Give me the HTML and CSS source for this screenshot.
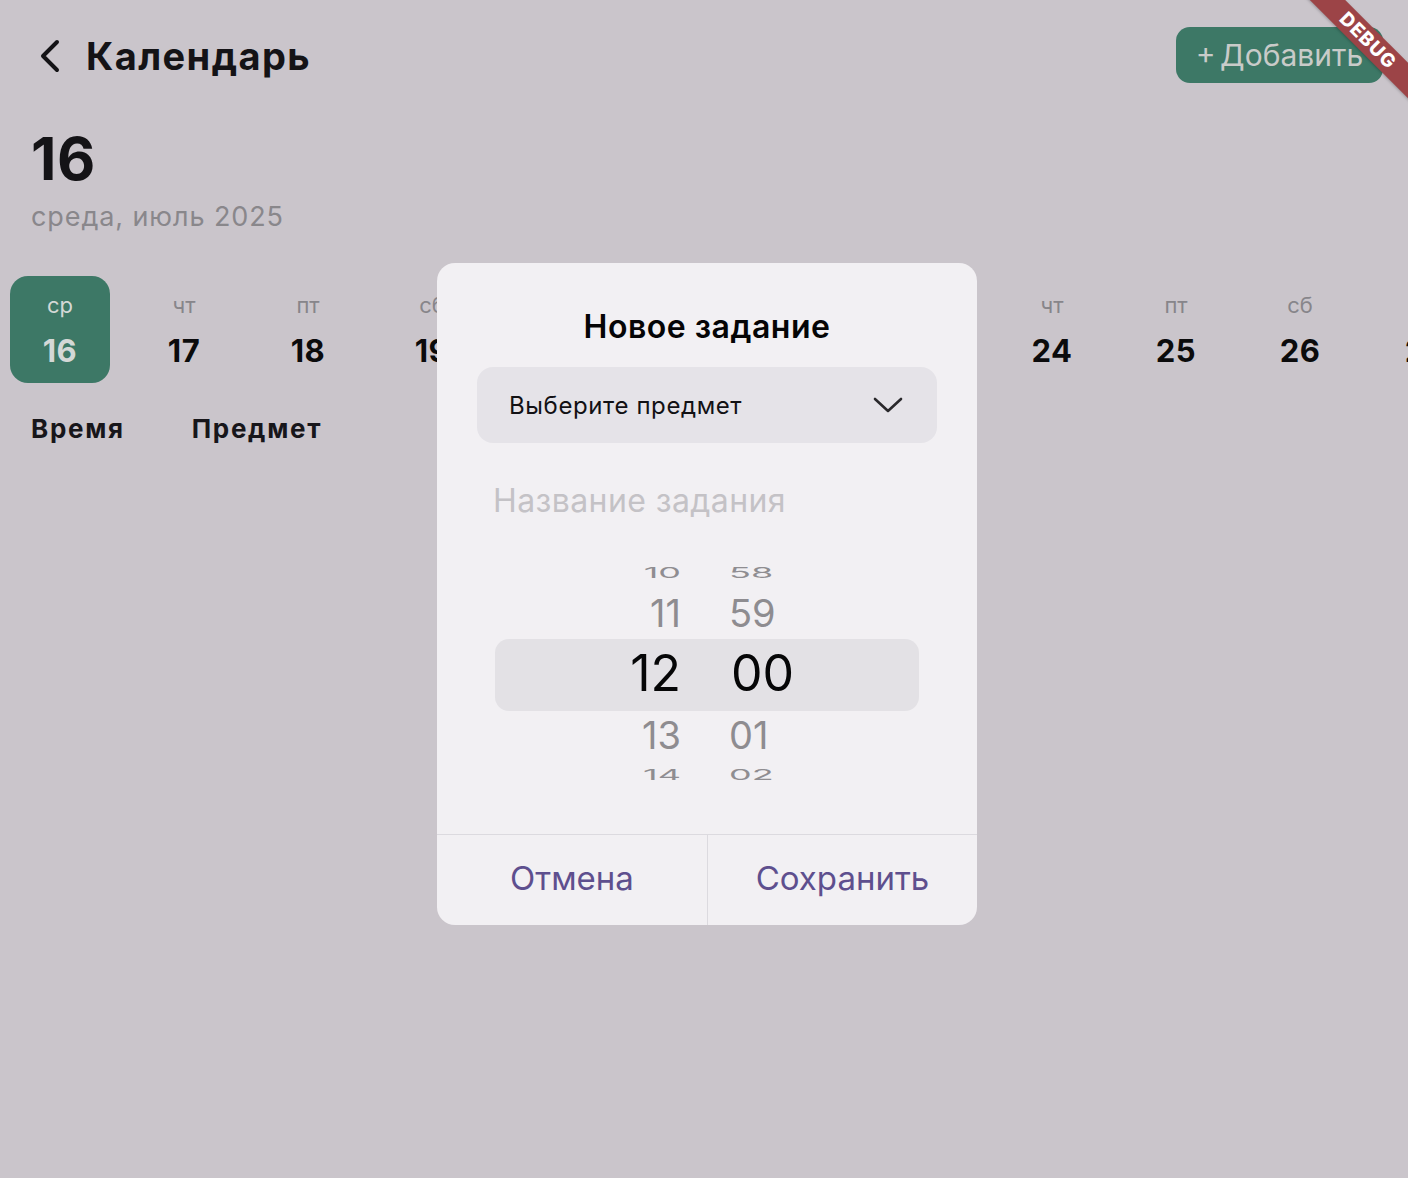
FILE: index.html
```html
<!DOCTYPE html>
<html lang="ru">
<head>
<meta charset="utf-8">
<title>Календарь</title>
<link rel="stylesheet" href="styles.css">
</head>
<body>
<div class="page">
  <header class="topbar">
    <div class="back">
      <svg class="back-icon" width="24" height="36" viewBox="0 0 24 36"><path d="M18 4 L4 18 L18 32" fill="none" stroke="#141316" stroke-width="4" stroke-linecap="round" stroke-linejoin="round"/></svg>
      <h1 class="title">Календарь</h1>
    </div>
    <button class="add-btn">+ Добавить</button>
  </header>

  <section class="date-head">
    <div class="big-day">16</div>
    <div class="sub-date">среда, июль 2025</div>
  </section>

  <div class="days">
    <div class="day selected"><span class="dow">ср</span><span class="num">16</span></div>
    <div class="day"><span class="dow">чт</span><span class="num">17</span></div>
    <div class="day"><span class="dow">пт</span><span class="num">18</span></div>
    <div class="day"><span class="dow">сб</span><span class="num">19</span></div>
    <div class="day"><span class="dow">вс</span><span class="num">20</span></div>
    <div class="day"><span class="dow">пн</span><span class="num">21</span></div>
    <div class="day"><span class="dow">вт</span><span class="num">22</span></div>
    <div class="day"><span class="dow">ср</span><span class="num">23</span></div>
    <div class="day"><span class="dow">чт</span><span class="num">24</span></div>
    <div class="day"><span class="dow">пт</span><span class="num">25</span></div>
    <div class="day"><span class="dow">сб</span><span class="num">26</span></div>
    <div class="day"><span class="dow">вс</span><span class="num">27</span></div>
  </div>

  <div class="cols">
    <span class="col-time">Время</span>
    <span class="col-subj">Предмет</span>
  </div>
</div>

<div class="dialog">
  <div class="dialog-body">
    <h2 class="dialog-title">Новое задание</h2>
    <div class="select">
      <span>Выберите предмет</span>
      <svg width="30" height="18" viewBox="0 0 30 18"><path d="M2 3 L15 15 L28 3" fill="none" stroke="#2a292c" stroke-width="2.6" stroke-linecap="round" stroke-linejoin="round"/></svg>
    </div>
    <div class="name-input">Название задания</div>
    <div class="picker">
      <div class="band"></div>
      <div class="row far"><span class="h">10</span><span class="m">58</span></div>
      <div class="row near"><span class="h">11</span><span class="m">59</span></div>
      <div class="row cur"><span class="h">12</span><span class="m">00</span></div>
      <div class="row near"><span class="h">13</span><span class="m">01</span></div>
      <div class="row far"><span class="h">14</span><span class="m">02</span></div>
    </div>
  </div>
  <div class="actions">
    <button class="act">Отмена</button>
    <button class="act">Сохранить</button>
  </div>
</div>

<div class="debug">DEBUG</div>
</body>
</html>
```

FILE: styles.css
```css
* { box-sizing: border-box; }
html, body { margin: 0; padding: 0; }
body {
  width: 1408px;
  height: 1178px;
  overflow: hidden;
  background: #cac5cb;
  font-family: Inter, "Noto Sans", "Liberation Sans", sans-serif;
  color: #141316;
  position: relative;
}
.page { width: 1408px; }
.topbar {
  display: flex;
  justify-content: space-between;
  align-items: flex-start;
  padding: 27px 25px 0 39px;
}
.back { display: flex; align-items: center; gap: 23px; padding-top: 10px; }
.back-icon { display: block; }
.title {
  margin: 0;
  font-size: 38px;
  font-weight: 700;
  letter-spacing: 1.4px;
  line-height: 38px;
}
.add-btn {
  border: none;
  background: #3d7866;
  color: #c9cbc9;
  font-family: inherit;
  font-size: 30px;
  font-weight: 400;
  height: 56px;
  width: 207px;
  border-radius: 14px;
  padding: 0;
  word-spacing: -4px;
}
.date-head { padding: 46px 0 0 31px; }
.big-day {
  font-size: 59px;
  font-weight: 700;
  line-height: 60px;
  color: #141316;
  letter-spacing: 0.5px;
}
.sub-date {
  margin-top: 12px;
  font-size: 27px;
  color: #89878b;
  letter-spacing: 0.9px;
  line-height: 32px;
}
.days {
  display: flex;
  gap: 24px;
  padding: 0 0 0 10px;
  margin-top: 43px;
  width: 1408px;
  overflow: hidden;
}
.day {
  flex: 0 0 100px;
  height: 107px;
  border-radius: 18px;
  display: flex;
  flex-direction: column;
  align-items: center;
  padding-top: 15px;
}
.day .dow { font-size: 22px; color: #87858a; line-height: 28px; }
.day .num { font-size: 31px; font-weight: 700; color: #0b0b0c; line-height: 36px; margin-top: 14px; letter-spacing: 0.5px; }
.day.selected { background: #3d7866; }
.day.selected .dow { color: #d4d8d6; }
.day.selected .num { color: #d4d8d6; }
.cols {
  display: flex;
  gap: 67px;
  padding: 30px 0 0 31px;
  font-size: 26px;
  font-weight: 700;
  letter-spacing: 1.7px;
  color: #17161a;
}

.dialog {
  position: absolute;
  left: 437px;
  top: 263px;
  width: 540px;
  height: 662px;
  background: #f2f0f3;
  border-radius: 18px;
  display: flex;
  flex-direction: column;
  overflow: hidden;
}
.dialog-body { flex: 1; padding: 44px 40px 0 40px; display: flex; flex-direction: column; }
.dialog-title {
  margin: 0;
  text-align: center;
  font-size: 32px;
  font-weight: 600;
  letter-spacing: 0.5px;
  line-height: 40px;
  color: #050506;
}
.select {
  margin-top: 20px;
  height: 76px;
  background: #e5e3e8;
  border-radius: 16px;
  display: flex;
  align-items: center;
  justify-content: space-between;
  padding: 0 34px 0 32px;
  font-size: 24px;
  letter-spacing: 0.6px;
  color: #121114;
}
.name-input {
  margin-top: 38px;
  padding-left: 16px;
  font-size: 32px;
  letter-spacing: 0.4px;
  color: #c4c2c6;
  line-height: 40px;
}
.picker {
  position: relative;
  margin: 38px 18px 0 18px;
  height: 230px;
  display: flex;
  flex-direction: column;
  align-items: stretch;
}
.band {
  position: absolute;
  left: 0; right: 0;
  top: 80px;
  height: 72px;
  background: #e3e1e5;
  border-radius: 14px;
}
.row {
  position: relative;
  display: flex;
  justify-content: center;
  color: #8e8c90;
}
.row .h { width: 150px; text-align: right; }
.row .m { width: 150px; text-align: left; }
.row.far {
  height: 28px;
  font-size: 36px;
  line-height: 28px;
  transform: scaleY(0.4);
  color: #8f8d91;
}
.row.near { height: 52px; font-size: 38px; line-height: 52px; }
.row.cur { height: 72px; font-size: 50px; line-height: 68px; color: #060607; }
.row.far .h { padding-right: 26px; }
.row.far .m { padding-left: 22px; }
.row.near .h { padding-right: 26px; }
.row.near .m { padding-left: 22px; }
.row.cur .h { padding-right: 26px; }
.row.cur .m { padding-left: 24px; }
.actions {
  height: 91px;
  display: flex;
  border-top: 1px solid #dcdadf;
}
.act {
  flex: 0 0 270px;
  border: none;
  background: transparent;
  font-family: inherit;
  font-size: 33px;
  color: #5e4f8e;
  padding: 0 0 4px 0;
}
.act + .act { flex: 1; border-left: 1px solid #dcdadf; }

.debug {
  position: absolute;
  left: 1266px;
  top: 28px;
  width: 204px;
  height: 25px;
  transform: rotate(45deg);
  background: #9c4447;
  color: #ffffff;
  font-size: 19px;
  font-weight: 800;
  letter-spacing: 1px;
  text-align: center;
  line-height: 25px;
  box-shadow: 0 1px 3px rgba(0,0,0,0.25);
}
```
